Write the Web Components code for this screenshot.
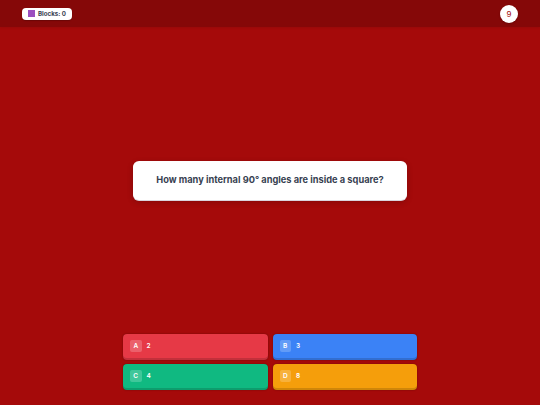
<!DOCTYPE html>
<html>
<head>
<meta charset="utf-8">
<style>
  html, body { margin: 0; height: 100%; }
  body { font-family: Inter, "Liberation Sans", sans-serif; }
</style>
</head>
<body>
<quiz-screen>
  <quiz-header slot="header" blocks="0" timer="9"></quiz-header>
  <question-card slot="question">How many internal 90° angles are inside a square?</question-card>
  <answer-button slot="answers" letter="A" color="#e63946">2</answer-button>
  <answer-button slot="answers" letter="B" color="#3b82f6">3</answer-button>
  <answer-button slot="answers" letter="C" color="#10b981">4</answer-button>
  <answer-button slot="answers" letter="D" color="#f59e0b">8</answer-button>
</quiz-screen>
<script>
class QuizScreen extends HTMLElement {
  constructor() {
    super();
    this.attachShadow({ mode: "open" });
    this.shadowRoot.innerHTML = `
      <style>
        :host { display: flex; flex-direction: column; width: 540px; height: 405px; background: #a50a0a; overflow: hidden; }
        .middle { flex: 1; display: flex; align-items: center; justify-content: center; }
        .answers { display: grid; grid-template-columns: 144.5px 144.5px; gap: 4px 5px; justify-content: center; padding-bottom: 15px; }
      </style>
      <slot name="header"></slot>
      <div class="middle"><slot name="question"></slot></div>
      <div class="answers"><slot name="answers"></slot></div>
    `;
  }
}

class QuizHeader extends HTMLElement {
  constructor() {
    super();
    this.attachShadow({ mode: "open" });
    this.shadowRoot.innerHTML = `
      <style>
        :host { display: flex; align-items: center; justify-content: space-between; height: 27px; padding: 0 22px; background: #850808; box-shadow: 0 1px 2px rgba(0,0,0,.08); }
        .chip { display: flex; align-items: center; gap: 3px; height: 12px; padding: 0 6.5px 0 6px; background: #fff; border-radius: 4px; box-shadow: 0 1px 1px rgba(0,0,0,.2); font-size: 6.2px; font-weight: 700; color: #374151; }
        .swatch { width: 7px; height: 7px; background: #9b4fc0; }
        .timer { width: 18px; height: 18px; border-radius: 50%; background: #fff; display: flex; align-items: center; justify-content: center; font-size: 8px; font-weight: 400; color: #a30a0a; box-shadow: 0 1px 2px rgba(0,0,0,.2); }
      </style>
      <div class="chip"><span class="swatch"></span><span id="blocks"></span></div>
      <div class="timer" id="timer"></div>
    `;
  }

  connectedCallback() {
    this.shadowRoot.getElementById("blocks").textContent = "Blocks: " + this.getAttribute("blocks");
    this.shadowRoot.getElementById("timer").textContent = this.getAttribute("timer");
  }
}

class QuestionCard extends HTMLElement {
  constructor() {
    super();
    this.attachShadow({ mode: "open" });
    this.shadowRoot.innerHTML = `
      <style>
        :host { display: flex; align-items: center; justify-content: center; width: 274px; height: 39px; box-sizing: border-box; padding-bottom: 2px; background: #fff; border-radius: 6px; box-shadow: 0 1px 0 #d9d5de, 0 2px 6px rgba(0,0,0,.2); font-size: 9.25px; font-weight: 700; color: #374151; }
      </style>
      <slot></slot>
    `;
  }
}

class AnswerButton extends HTMLElement {
  constructor() {
    super();
    this.attachShadow({ mode: "open" });
    this.shadowRoot.innerHTML = `
      <style>
        :host { display: flex; align-items: flex-start; gap: 5px; height: 26px; box-sizing: border-box; padding: 6px 7px; border-radius: 4px; background: var(--c); box-shadow: inset 0 -2px 0 rgba(0,0,0,.15), 0 0 1.5px rgba(0,0,0,.45); color: #fff; font-size: 6.5px; font-weight: 600; }
        .letter { width: 11.5px; height: 11.5px; border-radius: 2px; background: rgba(255,255,255,.2); display: flex; align-items: center; justify-content: center; }
        .text { line-height: 12px; }
      </style>
      <span class="letter" id="letter"></span>
      <span class="text"><slot></slot></span>
    `;
  }

  connectedCallback() {
    this.style.setProperty("--c", this.getAttribute("color"));
    this.shadowRoot.getElementById("letter").textContent = this.getAttribute("letter");
  }
}

customElements.define("quiz-screen", QuizScreen);
customElements.define("quiz-header", QuizHeader);
customElements.define("question-card", QuestionCard);
customElements.define("answer-button", AnswerButton);
</script>
</body>
</html>
